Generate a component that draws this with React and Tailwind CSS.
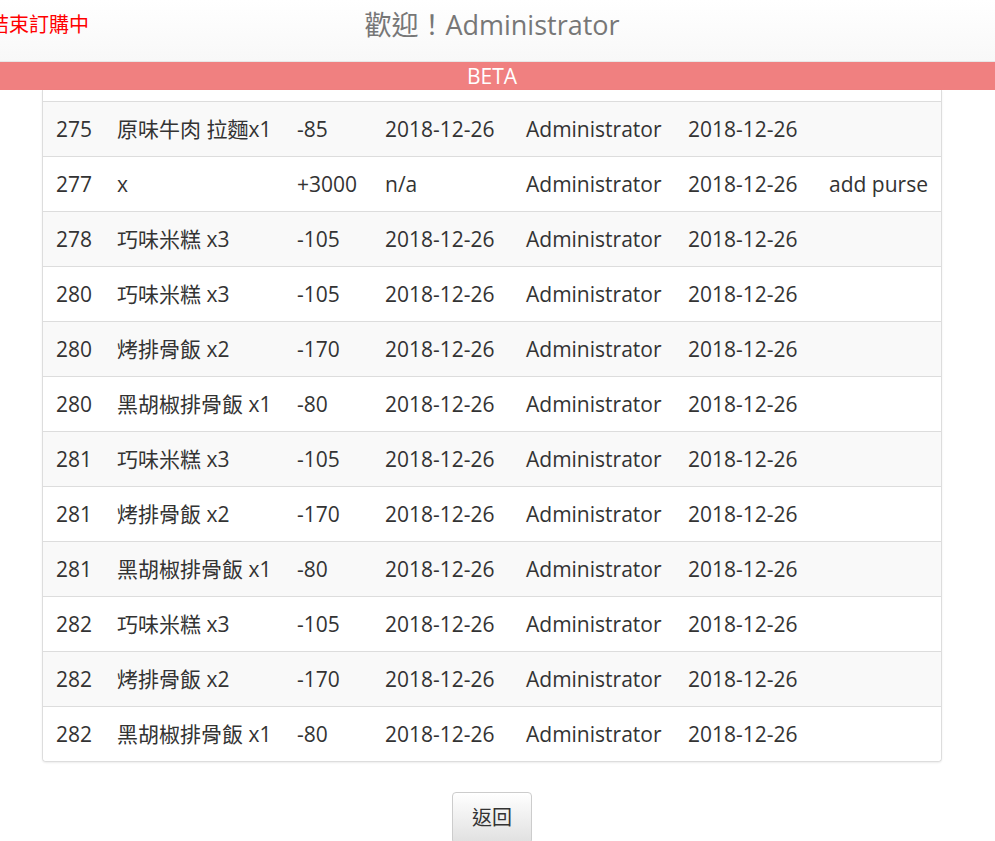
const rows = [
  ['275', '原味牛肉 拉麵x1', '-85', '2018-12-26', 'Administrator', '2018-12-26', ''],
  ['277', 'x', '+3000', 'n/a', 'Administrator', '2018-12-26', 'add purse'],
  ['278', '巧味米糕 x3', '-105', '2018-12-26', 'Administrator', '2018-12-26', ''],
  ['280', '巧味米糕 x3', '-105', '2018-12-26', 'Administrator', '2018-12-26', ''],
  ['280', '烤排骨飯 x2', '-170', '2018-12-26', 'Administrator', '2018-12-26', ''],
  ['280', '黑胡椒排骨飯 x1', '-80', '2018-12-26', 'Administrator', '2018-12-26', ''],
  ['281', '巧味米糕 x3', '-105', '2018-12-26', 'Administrator', '2018-12-26', ''],
  ['281', '烤排骨飯 x2', '-170', '2018-12-26', 'Administrator', '2018-12-26', ''],
  ['281', '黑胡椒排骨飯 x1', '-80', '2018-12-26', 'Administrator', '2018-12-26', ''],
  ['282', '巧味米糕 x3', '-105', '2018-12-26', 'Administrator', '2018-12-26', ''],
  ['282', '烤排骨飯 x2', '-170', '2018-12-26', 'Administrator', '2018-12-26', ''],
  ['282', '黑胡椒排骨飯 x1', '-80', '2018-12-26', 'Administrator', '2018-12-26', ''],
]

export default function App() {
  return (
    <div className="min-h-screen bg-white text-[#333] overflow-hidden" style={{ fontFamily: '"Open Sans", "Noto Sans CJK TC", sans-serif' }}>
      {/* navbar */}
      <div className="h-[62px] flex items-center pb-[12px] relative bg-gradient-to-b from-white to-[#f8f8f8] border-b border-[#e7e7e7]">
        <span className="-ml-[11px] text-[20px] text-[#ff0000] whitespace-nowrap">結束訂購中</span>
        <div className="absolute left-0 right-[11px] top-0 h-[50px] flex items-center justify-center text-[27px] text-[#777] pointer-events-none">
          歡迎！Administrator
        </div>
      </div>
      <div className="h-[28px] bg-[#f08080] text-white text-[21px] leading-[28px] text-center pr-[11px]">BETA</div>

      {/* table panel */}
      <div className="mx-[42px] w-[900px] border-x border-b border-[#ddd] rounded-b-[4px] shadow-[0_1px_2px_rgba(0,0,0,0.08)] text-[21px]">
        <div className="h-[11px] bg-white" />
        {rows.map((r, i) => (
          <div
            key={i}
            className={`grid grid-cols-[61px_180px_88px_141px_162px_141px_124px] h-[55px] border-t border-[#ddd] items-center ${
              i % 2 === 0 ? 'bg-[#f9f9f9]' : 'bg-white'
            } ${i === rows.length - 1 ? 'rounded-b-[4px]' : ''}`}
          >
            {r.map((c, j) => (
              <div key={j} className="pl-[13px] pt-[1px] whitespace-nowrap">{c}</div>
            ))}
          </div>
        ))}
      </div>

      <div className="flex justify-center mt-[30px] pr-[11px]">
        <button className="h-[52px] w-[80px] rounded-[4px] border border-[#ccc] bg-gradient-to-b from-white to-[#e0e0e0] text-[20px] text-[#333]">
          返回
        </button>
      </div>
    </div>
  )
}
